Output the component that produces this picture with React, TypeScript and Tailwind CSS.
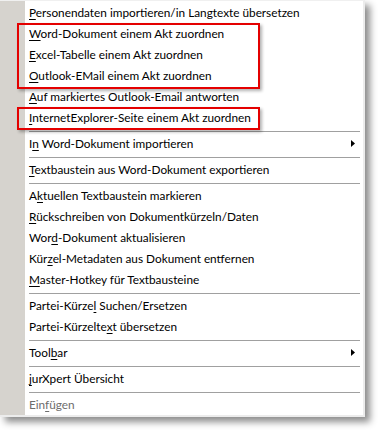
import React from "react";

type Item =
  | { type: "item"; pre: string; u: string; post: string; sub?: boolean; disabled?: boolean }
  | { type: "sep" };

const items: Item[] = [
  { type: "item", pre: "", u: "P", post: "ersonendaten importieren/in Langtexte übersetzen" },
  { type: "item", pre: "", u: "W", post: "ord-Dokument einem Akt zuordnen" },
  { type: "item", pre: "", u: "E", post: "xcel-Tabelle einem Akt zuordnen" },
  { type: "item", pre: "", u: "O", post: "utlook-EMail einem Akt zuordnen" },
  { type: "item", pre: "", u: "A", post: "uf markiertes Outlook-Email antworten" },
  { type: "item", pre: "", u: "I", post: "nternetExplorer-Seite einem Akt zuordnen" },
  { type: "sep" },
  { type: "item", pre: "I", u: "n", post: " Word-Dokument importieren", sub: true },
  { type: "sep" },
  { type: "item", pre: "", u: "T", post: "extbaustein aus Word-Dokument exportieren" },
  { type: "sep" },
  { type: "item", pre: "A", u: "k", post: "tuellen Textbaustein markieren" },
  { type: "item", pre: "", u: "R", post: "ückschreiben von Dokumentkürzeln/Daten" },
  { type: "item", pre: "Wor", u: "d", post: "-Dokument aktualisieren" },
  { type: "item", pre: "Kür", u: "z", post: "el-Metadaten aus Dokument entfernen" },
  { type: "item", pre: "", u: "M", post: "aster-Hotkey für Textbausteine" },
  { type: "sep" },
  { type: "item", pre: "Partei-Kürze", u: "l", post: " Suchen/Ersetzen" },
  { type: "item", pre: "Partei-Kürzelte", u: "x", post: "t übersetzen" },
  { type: "sep" },
  { type: "item", pre: "Tool", u: "b", post: "ar", sub: true },
  { type: "sep" },
  { type: "item", pre: "", u: "j", post: "urXpert Übersicht" },
  { type: "sep" },
  { type: "item", pre: "Ein", u: "f", post: "ügen", disabled: true },
];

function Arrow() {
  return (
    <svg width="4" height="7" viewBox="0 0 4 7" className="absolute left-[326px]">
      <path d="M0 0 L4 3.5 L0 7 Z" fill="#000" />
    </svg>
  );
}

export default function App() {
  return (
    <div
      className="relative w-[380px] h-[433px] bg-white overflow-hidden"
      style={{ fontFamily: 'Lato, "Noto Sans", sans-serif' }}
    >
      <div className="flex w-[365px] border-t border-[#f0f0f0] border-r-2 border-r-[#ececec] border-b-2 border-b-[#ececec] shadow-[5px_5px_7px_rgba(0,0,0,0.45)]">
        <div className="w-[25px] bg-[#d6d3ce]" />
        <div className="flex-1 bg-white pt-[1px] flex flex-col">
          {items.map((it, i) =>
            it.type === "sep" ? (
              <div key={i} className="h-[5px] pt-[3px] pl-[4px] pr-[3px]">
                <div className="h-[1px] bg-[#a0a0a0]" />
              </div>
            ) : (
              <div
                key={i}
                className={`relative h-[21px] flex items-center pl-[4px] text-[11.8px] leading-none whitespace-nowrap ${
                  it.disabled ? "text-[#6d6d6d]" : "text-black"
                }`}
              >
                <span className="pt-[1px]">
                  {it.pre}
                  <u className="underline-offset-[2px]">{it.u}</u>
                  {it.post}
                </span>
                {it.sub && <Arrow />}
              </div>
            )
          )}
        </div>
      </div>
      <div className="absolute left-[17px] top-[23px] w-[243px] h-[66px] border-2 border-[#e40000] shadow-[2px_2px_3px_rgba(0,0,0,0.3)]" />
      <div className="absolute left-[17px] top-[107px] w-[243px] h-[23px] border-2 border-[#e40000] shadow-[2px_2px_3px_rgba(0,0,0,0.3)]" />
    </div>
  );
}
